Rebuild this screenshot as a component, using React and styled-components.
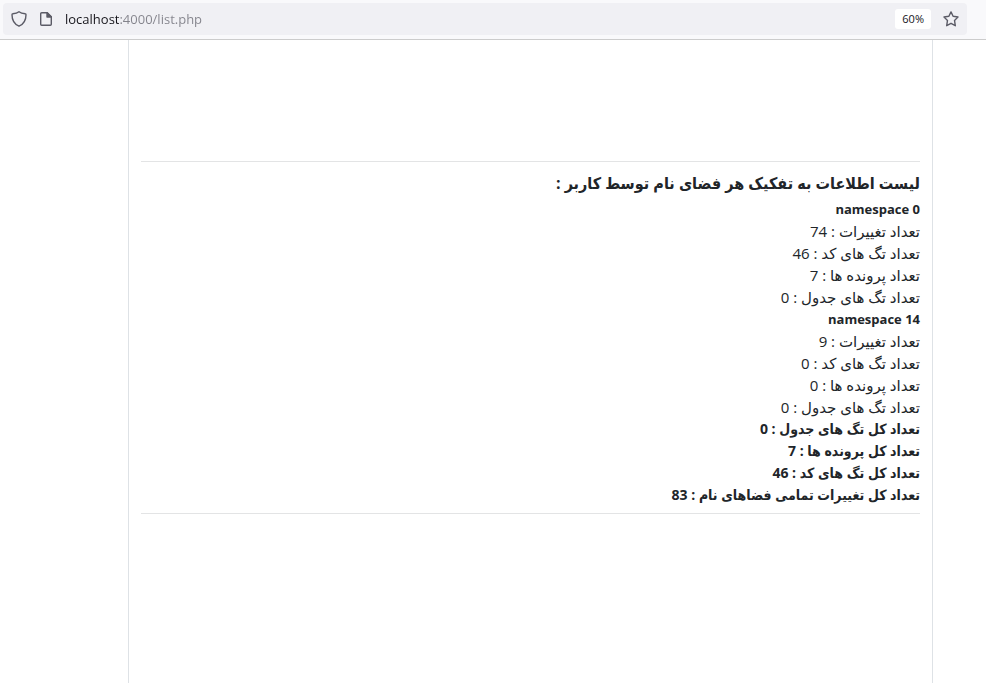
import React from 'react';
import styled, { createGlobalStyle } from 'styled-components';

const namespaces = [
    {
        id: 0,
        stats: [
            ['تعداد تغییرات', 74],
            ['تعداد تگ های کد', 46],
            ['تعداد پرونده ها', 7],
            ['تعداد تگ های جدول', 0],
        ],
    },
    {
        id: 14,
        stats: [
            ['تعداد تغییرات', 9],
            ['تعداد تگ های کد', 0],
            ['تعداد پرونده ها', 0],
            ['تعداد تگ های جدول', 0],
        ],
    },
];

const totals = [
    ['تعداد کل تگ های جدول', 0],
    ['تعداد کل پرونده ها', 7],
    ['تعداد کل تگ های کد', 46],
    ['تعداد کل تغییرات تمامی فضاهای نام', 83],
];

function StatList({ items, $bold }) {
    return (
        <StList $bold={$bold}>
            {items.map(([label, value]) => (
                <li key={label}>
                    {label} : {value}
                </li>
            ))}
        </StList>
    );
}

function AddressBar() {
    return (
        <StToolbar>
            <StField>
                <StIconBtn type="button" aria-label="Tracking protection">
                    <svg width="16" height="16" viewBox="0 0 16 16">
                        <path d="M8 .8 C6.3 2.2 4 2.7 1.8 2.8 C1.2 2.8 1 3.2 1 3.8 C1 9.2 3.2 13.2 8 15.2 C12.8 13.2 15 9.2 15 3.8 C15 3.2 14.8 2.8 14.2 2.8 C12 2.7 9.7 2.2 8 .8 Z" />
                    </svg>
                </StIconBtn>
                <StIconBtn type="button" aria-label="Site information">
                    <svg width="16" height="16" viewBox="0 0 16 16">
                        <path d="M9.3 1.7 H3.7 Q2.7 1.7 2.7 2.7 V13.3 Q2.7 14.3 3.7 14.3 H12.3 Q13.3 14.3 13.3 13.3 V5.7 Z" />
                        <path d="M9 1.7 V6 H13.3 Z" fill="#5b5b66" />
                    </svg>
                </StIconBtn>
                <StUrl
                    type="text"
                    aria-label="Address"
                    defaultValue="localhost:4000/list.php"
                    spellCheck={false}
                />
                <StZoom type="button">60%</StZoom>
                <StIconBtn type="button" aria-label="Bookmark this page">
                    <svg width="16" height="16" viewBox="0 0 16 16">
                        <path d="M8 .9 L10.1 5.3 L15 6 L11.5 9.4 L12.3 14.7 L8 12.3 L3.7 14.7 L4.5 9.4 L1 6 L5.9 5.3 Z" />
                    </svg>
                </StIconBtn>
            </StField>
        </StToolbar>
    );
}

function App() {
    return (
        <>
            <GlobalStyle />
            <StPage>
                <AddressBar />
                <StMain dir="rtl" lang="fa">
                    <StReport>
                        <StTitle>لیست اطلاعات به تفکیک هر فضای نام توسط کاربر :</StTitle>
                        {namespaces.map(({ id, stats }) => (
                            <section key={id}>
                                <StName>
                                    <bdi>namespace {id}</bdi>
                                </StName>
                                <StatList items={stats} />
                            </section>
                        ))}
                        <StatList items={totals} $bold />
                    </StReport>
                </StMain>
            </StPage>
        </>
    );
}

const boldFont = "'Open Sans', 'DejaVu Sans Condensed', 'DejaVu Sans', sans-serif";

const GlobalStyle = createGlobalStyle`
    * {
        box-sizing: border-box;
    }
    body {
        margin: 0;
        background: #fff;
        color: #212529;
        font-family: 'Open Sans', 'DejaVu Sans', sans-serif;
    }
`;

const StPage = styled.div`
    display: flex;
    flex-direction: column;
    min-height: 100vh;
`;

const StToolbar = styled.header`
    padding: 3px 19px 4px 3px;
    background: #f9f9fb;
    border-bottom: 1px solid #ccc;
`;

const StField = styled.div`
    display: flex;
    align-items: center;
    height: 32px;
    padding: 0 8px;
    background: #f0f0f4;
    border-radius: 4px;
`;

const StIconBtn = styled.button`
    display: flex;
    margin-right: 11px;
    padding: 0;
    background: transparent;
    border: 0;

    &:last-child {
        margin-right: 0;
    }

    svg {
        fill: none;
        stroke: #5b5b66;
        stroke-width: 1.4;
        stroke-linejoin: round;
    }
`;

/* the host is dark, the port and path are dimmed */
const StUrl = styled.input`
    flex: 1;
    min-width: 0;
    padding: 0;
    border: 0;
    outline: none;
    background: linear-gradient(to right, #15141a 54px, #83838b 54px);
    background-clip: text;
    -webkit-background-clip: text;
    color: transparent;
    caret-color: #15141a;
    font-family: inherit;
    font-size: 13px;
    line-height: 20px;
`;

const StZoom = styled.button`
    height: 20px;
    margin-right: 12px;
    padding: 0 7px;
    background: #fff;
    border: 0;
    border-radius: 3px;
    color: #15141a;
    font-family: inherit;
    font-size: 11px;
    line-height: 20px;
`;

const StMain = styled.main`
    flex: 1;
    margin: 0 53px 0 13%;
    padding: 121px 12px 0;
    border: solid #dee2e6;
    border-width: 0 1px;
`;

const StReport = styled.article`
    padding: 9px 0 7px;
    border: solid #e3e4e5;
    border-width: 1px 0;
`;

const StTitle = styled.h1`
    margin: 0 0 3px;
    font-family: ${boldFont};
    font-size: 16px;
    font-weight: 700;
    line-height: 24px;
`;

const StName = styled.h2`
    margin: 0;
    font-size: 13px;
    font-weight: 700;
    line-height: 22px;
`;

const StList = styled.ul`
    margin: 0;
    padding: 0;
    list-style: none;
    font-family: ${({ $bold }) => ($bold ? boldFont : 'inherit')};
    font-size: ${({ $bold }) => ($bold ? 14 : 15)}px;
    font-weight: ${({ $bold }) => ($bold ? 700 : 400)};
    line-height: 22px;
`;

export default App;
